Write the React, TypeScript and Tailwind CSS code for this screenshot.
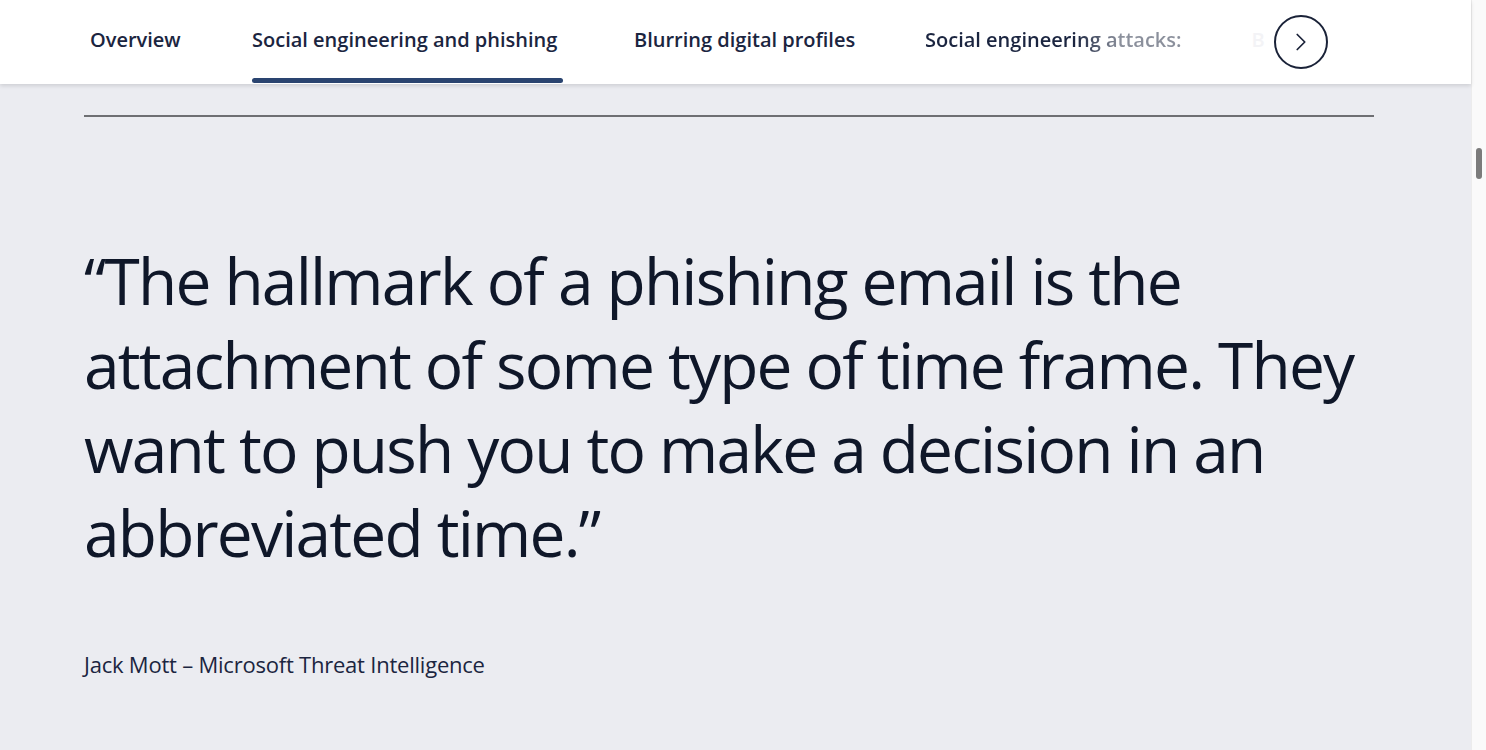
import { ChevronRight } from 'lucide-react';

const tabs = [
  { label: 'Overview', width: 'w-[162px]', active: false },
  { label: 'Social engineering and phishing', width: 'w-[382px]', active: true },
  { label: 'Blurring digital profiles', width: 'w-[291px]', active: false },
];

export default function App() {
  return (
    <div
      className="flex h-[750px] w-full overflow-hidden bg-[#ebecf1] text-[#0f1729]"
      style={{ fontFamily: '"Open Sans", "Noto Sans", sans-serif' }}
    >
      <div className="flex min-w-0 flex-1 flex-col">
        {/* tab bar */}
        <header className="relative z-10 flex h-[84px] shrink-0 items-center bg-white pl-[90px] shadow-[0_2px_4px_rgba(0,0,0,0.12)]">
          <nav className="flex h-full items-center">
            {tabs.map((t) => (
              <div key={t.label} className={`flex h-full shrink-0 items-center ${t.width}`}>
                <div className="relative flex h-full items-center pr-[6px]">
                  <span className="mb-[4px] whitespace-nowrap text-[20px] font-semibold text-[#1b2540]">{t.label}</span>
                  {t.active && (
                    <span className="absolute bottom-[1px] left-0 right-0 h-[5px] rounded-full bg-[#2a4470]" />
                  )}
                </div>
              </div>
            ))}
            <span className="mb-[4px] whitespace-nowrap bg-[linear-gradient(to_right,#1b2540_0px,#1b2540_150px,#8b909c_195px,#8b909c_260px)] bg-clip-text text-[20px] font-semibold text-transparent">
              Social engineering attacks:
            </span>
            <span className="mb-[4px] ml-[70px] text-[20px] font-semibold text-[#f3f3f6]">B</span>
          </nav>
          <button className="ml-[9px] flex h-[54px] w-[54px] shrink-0 items-center justify-center rounded-full border-2 border-[#1a2238] bg-white">
            <ChevronRight className="h-[30px] w-[30px] text-[#1a2238]" strokeWidth={1.4} />
          </button>
        </header>

        {/* content */}
        <main className="px-[84px] pr-[97px]">
          <div className="mt-[31px] h-[2px] bg-[#6e6f73]" />
          <blockquote className="mt-[122px] max-w-[1290px] text-[64px] font-medium leading-[84px] tracking-[-0.028em] text-[#0f1729]">
            “The hallmark of a phishing email is the attachment of some type of time frame. They want to push you to
            make a decision in an abbreviated time.”
          </blockquote>
          <p className="mt-[73px] text-[22px] tracking-[-0.01em] text-[#1b2540]">
            Jack Mott – Microsoft Threat Intelligence
          </p>
        </main>
      </div>

      {/* scrollbar */}
      <div className="relative w-[15px] shrink-0 border-l border-[#ececec] bg-[#fafafa]">
        <div className="absolute left-[4px] top-[148px] h-[31px] w-[6px] rounded-full bg-[#7b7b7b]" />
      </div>
    </div>
  );
}
